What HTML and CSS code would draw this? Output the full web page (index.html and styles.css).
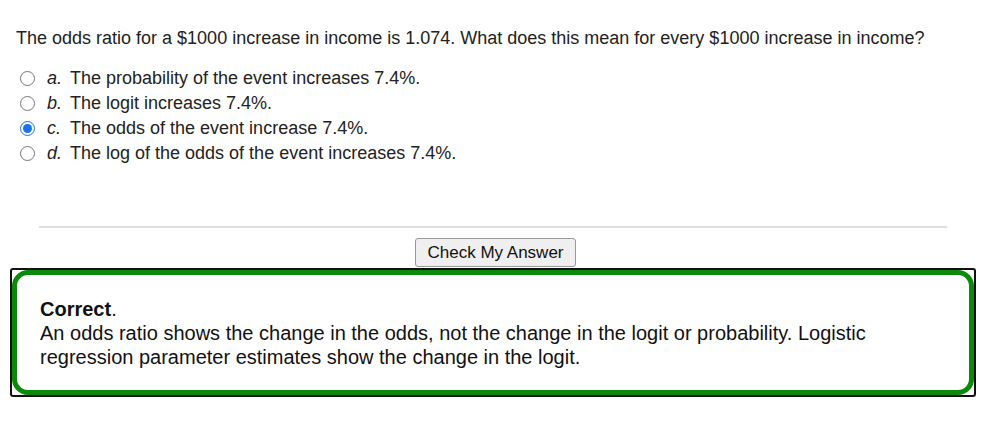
FILE: index.html
```html
<!DOCTYPE html>
<html>
<head>
<meta charset="utf-8">
<link rel="stylesheet" href="styles.css">
</head>
<body>
<div class="page">
  <p class="question">The odds ratio for a $1000 increase in income is 1.074. What does this mean for every $1000 increase in income?</p>
  <div class="options">
    <label class="opt"><input type="radio" name="q"><span class="letter">a.</span><span class="txt">The probability of the event increases 7.4%.</span></label>
    <label class="opt"><input type="radio" name="q"><span class="letter">b.</span><span class="txt">The logit increases 7.4%.</span></label>
    <label class="opt"><input type="radio" name="q" checked><span class="letter">c.</span><span class="txt">The odds of the event increase 7.4%.</span></label>
    <label class="opt"><input type="radio" name="q"><span class="letter">d.</span><span class="txt">The log of the odds of the event increases 7.4%.</span></label>
  </div>
  <div class="rule"></div>
  <div class="btnrow"><button class="check">Check My Answer</button></div>
  <div class="feedback">
    <div class="inner">
      <p><b>Correct</b>.<br>An odds ratio shows the change in the odds, not the change in the logit or probability. Logistic regression parameter estimates show the change in the logit.</p>
    </div>
  </div>
</div>
</body>
</html>
```
FILE: styles.css
```css
html, body { margin: 0; padding: 0; background: #fff; }
body { font-family: "Liberation Sans", Arial, sans-serif; color: #222; }
.page { padding: 0 10px 0 10px; }
.question { margin: 0; padding: 28px 0 0 6px; font-size: 18px; line-height: 20px; color: #222; }
.options { padding: 18px 0 0 0; display: flex; flex-direction: column; }
.opt { display: flex; align-items: center; height: 25px; font-size: 18px; color: #222; }
.opt input { margin: 0 0 0 10px; width: 15px; height: 15px; accent-color: #1a73e8; }
.letter { font-style: italic; width: 23px; margin-left: 12px; }
.rule { height: 2px; background: #dde0e0; margin: 60px 29px 0 29px; }
.btnrow { display: flex; justify-content: center; padding-top: 10px; padding-left: 5px; }
.check { font-family: "Liberation Sans", Arial, sans-serif; font-size: 17px; color: #111; background: #efefef; border: 1px solid #999; border-radius: 3px; width: 161px; height: 29px; padding: 0; }
.feedback { margin-top: 1px; border: 2px solid #111; border-radius: 3px; height: 125px; }
.inner { height: 100%; box-sizing: border-box; border: 5px solid #0a8a0a; border-radius: 16px; padding: 22px 60px 0 23px; }
.inner p { margin: 0; font-size: 20px; line-height: 24px; color: #111; }
.inner b { font-weight: bold; }
```
